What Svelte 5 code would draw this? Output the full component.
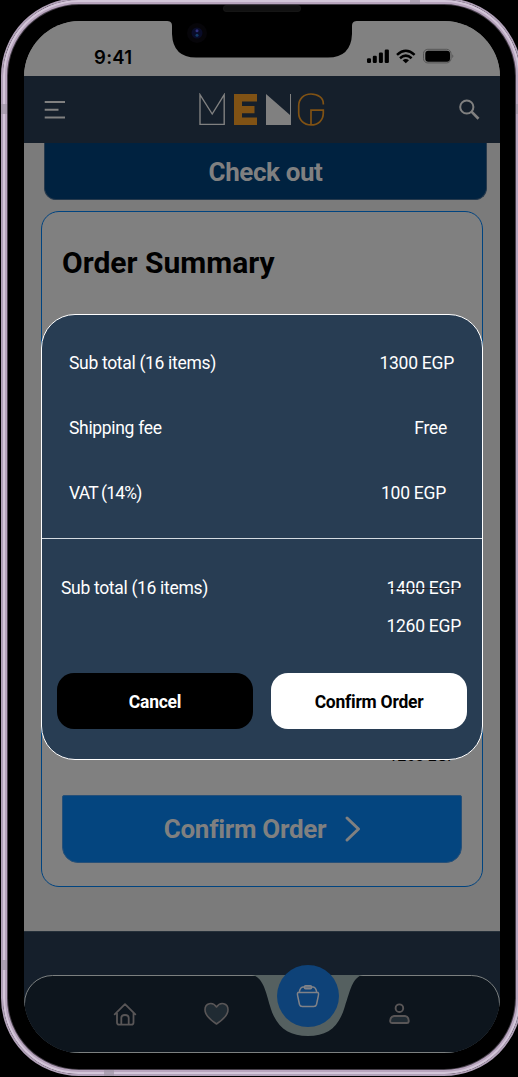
<script>
  const charges = [
    { label: 'Sub total (16 items)', amount: '1300 EGP', inset: 28, tracking: -0.32 },
    { label: 'Shipping fee', amount: 'Free', inset: 35, tracking: -0.32 },
    { label: 'VAT (14%)', amount: '100 EGP', inset: 36, tracking: -0.8 }
  ];
</script>

<main class="phone">
  <div class="screen">
    <div class="status">
      <time>9:41</time>
      <svg width="90" height="18" viewBox="0 0 90 18">
        <g fill="#000">
          <rect x="2" y="10.200" width="4" height="4.800" rx="1.200" />
          <rect x="7.800" y="7.700" width="4" height="7.300" rx="1.200" />
          <rect x="13.900" y="4.500" width="4" height="10.500" rx="1.200" />
          <rect x="19.700" y="1.600" width="4.200" height="13.400" rx="1.200" />
          <rect x="60.300" y="2.700" width="24.700" height="11" rx="3" />
          <path d="M37.600 12.300Q40.800 9.800 44 12.300L40.800 15.200Z" />
        </g>
        <g fill="none" stroke="#000" stroke-width="2.500">
          <path d="M32 6.800Q40.800-1.200 49.600 6.800" />
          <path d="M35 10.200Q40.800 5 46.600 10.200" />
        </g>
        <rect x="58.500" y="1.300" width="27.500" height="13.600" rx="4.300" fill="none" stroke="#555" />
        <path d="M87.300 6.300Q89.400 8 87.300 10.200Z" fill="#555" />
      </svg>
    </div>

    <header>
      <svg width="22" height="20" viewBox="0 0 22 20" stroke="#808080" stroke-width="2">
        <path d="M.7 1.900H21M.7 9.800H14.500M.7 17.600H21" />
      </svg>
      <svg class="logo" width="128" height="34" viewBox="0 0 128 34">
        <path d="M2 1.700V31.400H26.200V1.700L14.200 21Z" fill="none" stroke="#808080" stroke-width="1.400" />
        <path d="M36 1H59V8.500H44V13H56.500V20.200H44V24.500H59V32H36Z" fill="#805214" />
        <path d="M68 1L92 22V1H93V32H68Z" fill="#808080" />
        <path d="M125.300 11.500V10.500C125.300 5 120 1 113 1C105.500 1 100.700 6 100.700 13V20C100.700 27 106 31.900 113 31.900C120 31.900 125.300 27.500 125.300 20V17.200H113V31.900" fill="none" stroke="#805214" stroke-width="1.700" />
      </svg>
      <svg width="22" height="22" viewBox="0 0 22 22" fill="none" stroke="#808080" stroke-width="2">
        <circle cx="8.800" cy="8" r="6.600" /><path d="M13.500 12.600L20.500 19.700" stroke-width="2.700" />
      </svg>
    </header>

    <section class="page">
      <div class="checkout"><span>Check out</span></div>
      <article class="summary">
        <h1>Order Summary</h1>
        <div class="rest">
          <p>1260 EGP</p>
          <div class="confirm">
            <span>Confirm Order</span>
            <svg width="18" height="28" viewBox="0 0 18 28" fill="none" stroke="#808080" stroke-width="3" stroke-linecap="round" stroke-linejoin="round"><path d="M3 3L14.500 14L3 25" /></svg>
          </div>
        </div>
      </article>
    </section>

    <footer>
      <nav>
        <svg class="shape" width="476" height="78" viewBox="0 0 476 78">
          <rect x=".5" y=".5" width="475" height="77" rx="28" fill="#0d151d" stroke="#7c8080" />
          <path d="M228 0C239 2 242 17 246 31C252 52 264 61 284 61C304 61 315 52 321 31C326 17 328 2 339 0Z" fill="#556060" />
        </svg>
        <svg class="icon home" width="24" height="26" viewBox="0 0 24 26" fill="none" stroke="#595657" stroke-width="1.800" stroke-linejoin="round" stroke-linecap="round">
          <path d="M1.700 13.400L12 3.200L22.300 13.400M4 12V21.500Q4 23.700 6.200 23.700H18.300Q20.500 23.700 20.500 21.500V12M8.300 23.500V17Q8.300 14 12 14Q15.700 14 15.700 17V23.500" />
        </svg>
        <svg class="icon heart" width="26" height="24" viewBox="0 0 26 24" fill="#202b33" stroke="#595657" stroke-width="1.600" stroke-linejoin="round">
          <path d="M12.500 22C8 19 1 13.500 1 7.700C1 1.200 8.500-.8 12.500 5C16.500-.8 24 1.200 24 7.700C24 13.500 17 19 12.500 22Z" />
        </svg>
        <div class="bag">
          <svg width="24" height="24" viewBox="0 0 24 24" fill="none" stroke="#808288" stroke-width="1.500" stroke-linejoin="round">
            <path d="M3.300 8.200Q4 3.300 7 3H17Q20 3.300 20.700 8.200M1.900 8.500H22.100Q23 9.500 22.300 12L20.500 20.500Q19.900 22.500 17.700 22.500H6.300Q4.100 22.500 3.500 20.500L1.700 12Q1 9.500 1.900 8.500Z" />
            <rect x="8.500" y="1.700" width="7" height="3" rx="1" />
          </svg>
        </div>
        <svg class="icon user" width="22" height="22" viewBox="0 0 22 22" fill="none" stroke="#595657" stroke-width="1.900">
          <circle cx="11.400" cy="5.200" r="3.800" />
          <path d="M6 13H17Q20.500 13.500 20.700 17.500V18.500Q20.500 20 19 20H4Q2.300 20 2.200 18.500V17.500Q2.500 13.500 6 13Z" fill="#202b33" />
        </svg>
      </nav>
    </footer>

    <dialog open>
      <div class="charges">
        {#each charges as row}
          <div class="row" style="padding-right: {row.inset}px">
            <span style="letter-spacing: {row.tracking}px">{row.label}</span><span class="amount">{row.amount}</span>
          </div>
        {/each}
      </div>
      <div class="totals">
        <span class="label">Sub total (16 items)</span>
        <div class="amount"><del>1400 EGP</del><span>1260 EGP</span></div>
      </div>
      <div class="actions">
        <button class="cancel">Cancel</button>
        <button class="accept">Confirm Order</button>
      </div>
    </dialog>
  </div>

  <svg class="notch" width="180" height="60" viewBox="0 0 180 60">
    <path d="M-6 17C-2 17 0 18 0 22V30Q1 53.500 24 53.500H156Q179 53.500 180 30V22C180 18 182 17 186 17Z" fill="#000" />
    <rect x="51.500" y="1.500" width="77" height="6" rx="2.500" fill="#111" stroke="#1b1b1b" stroke-width=".7" />
    <circle cx="25" cy="29" r="10" fill="#060509" />
    <circle cx="25" cy="29" r="5.500" fill="#090c28" />
    <circle cx="25" cy="26.700" r="1.500" fill="#30317d" />
    <circle cx="25" cy="31.300" r="1.500" fill="#123c68" />
  </svg>
  <i class="band left high"></i><i class="band left low"></i>
  <i class="band right high"></i><i class="band right low"></i>
  <i class="band top"></i><i class="band bottom"></i>
</main>

<style>
  :global(body) { background: #000; overflow: hidden; }
  :global(#app) { display: flow-root; }
  * { box-sizing: border-box; margin: 0; }
  svg { display: block; }
  .phone {
    position: relative; width: 521px; height: 1078px; margin: -2px 0 0 1px;
    padding: 21px 0 0 21px; border: 2px solid #b1a1b8; border-radius: 78px;
    background: #000; font-family: Roboto, sans-serif; color: #fff;
    box-shadow: inset 0 0 0 2px #d3c6d9, inset 0 0 0 4px #b8a5be, inset 0 0 0 5px #47404b;
  }
  .screen {
    position: relative; width: 476px; height: 1032px; border-radius: 56px;
    overflow: hidden; display: flex; flex-direction: column; background: #7b7b7b;
  }
  .status {
    height: 55px; background: #818181; display: flex; justify-content: space-between;
    padding: 27px 45px 0 70px;
  }
  time { color: #000; font: 600 18.500px/18px Inter, sans-serif; letter-spacing: .3px; }
  header {
    height: 67px; background: #151f2b; display: flex; align-items: center;
    justify-content: space-between; padding: 0 20px;
  }
  .page { height: 788px; padding: 0 13px 0 17px; }
  .checkout {
    height: 57px; margin-left: 3px; background: #002240; border: 1px solid #26394c;
    border-top: 0; border-radius: 0 0 12px 12px; color: #808080;
    font: 700 26px/59px Roboto, sans-serif; letter-spacing: -.4px; text-align: center;
  }
  .summary {
    width: 442px; height: 676px; margin-top: 11px; border: 1px solid #004480;
    border-radius: 18px; background: #808080; padding: 31px 20px 23px;
    display: flex; flex-direction: column; justify-content: space-between;
  }
  h1 { color: #000; font: 700 30px/40px Roboto, sans-serif; }
  .rest p {
    color: #000; font-size: 16px; letter-spacing: -.2px; line-height: 20px;
    text-align: right; padding-right: 5px; margin-bottom: 29px;
  }
  .confirm {
    height: 68px; display: flex; align-items: center; justify-content: center; gap: 18px;
    background: #04457f; border: 1px solid #275078; border-radius: 2px 2px 16px 16px;
    color: #808080; font-size: 26px; font-weight: 700; letter-spacing: -.3px; padding-left: 2px;
  }
  footer { height: 122px; background: #151f2b; border-top: 1px solid #25303a; padding-top: 43px; }
  nav { position: relative; height: 78px; }
  .shape, .icon, .bag { position: absolute; }
  .home { left: 89px; top: 26px; }
  .heart { left: 180px; top: 27px; }
  .user { left: 364px; top: 28px; }
  .bag {
    left: 253px; top: -10px; width: 62px; height: 62px; border-radius: 50%;
    background: #0e4278; display: grid; place-items: center;
  }
  dialog {
    position: absolute; left: 17px; top: 293px; width: 442px; height: 446px; margin: 0;
    padding: 0; background: #283d53; color: #fff; border: 1px solid #fff;
    border-radius: 34px; font-size: 17.500px;
  }
  .charges { height: 224px; padding-top: 16px; border-bottom: 1px solid #d5dbe1; }
  .row { height: 64.700px; padding-left: 27px; display: flex; justify-content: space-between; align-items: center; }
  .amount { letter-spacing: -.25px; }
  .label { letter-spacing: -.32px; }
  .totals { height: 134px; padding: 30px 21px 0 19px; display: flex; justify-content: space-between; align-items: flex-start; line-height: 38px; }
  .totals div { display: grid; text-align: right; }
  del { position: relative; height: 38px; text-decoration: none; }
  del::after { content: ''; position: absolute; left: 4px; right: 0; top: 19px; height: 1px; background: #25242a; }
  .actions { display: flex; gap: 18px; padding: 0 15px; }
  button {
    width: 196px; height: 56px; border: 0; border-radius: 17px; padding: 2px 0 0;
    font: 700 17.500px Roboto, sans-serif; letter-spacing: -.25px;
  }
  .cancel { background: #000; color: #fff; }
  .accept { background: #fff; color: #000; }
  .notch { position: absolute; left: 169px; top: 4px; overflow: visible; }
  .band { position: absolute; background: #a096a5; opacity: .75; }
  .left { left: -2px; width: 6px; height: 10px; }
  .right { right: -2px; width: 6px; height: 10px; }
  .high { top: 104px; }
  .low { top: 960px; }
  .top { left: 407px; top: -2px; width: 10px; height: 6px; }
  .bottom { left: 101px; bottom: -2px; width: 10px; height: 6px; }
</style>
